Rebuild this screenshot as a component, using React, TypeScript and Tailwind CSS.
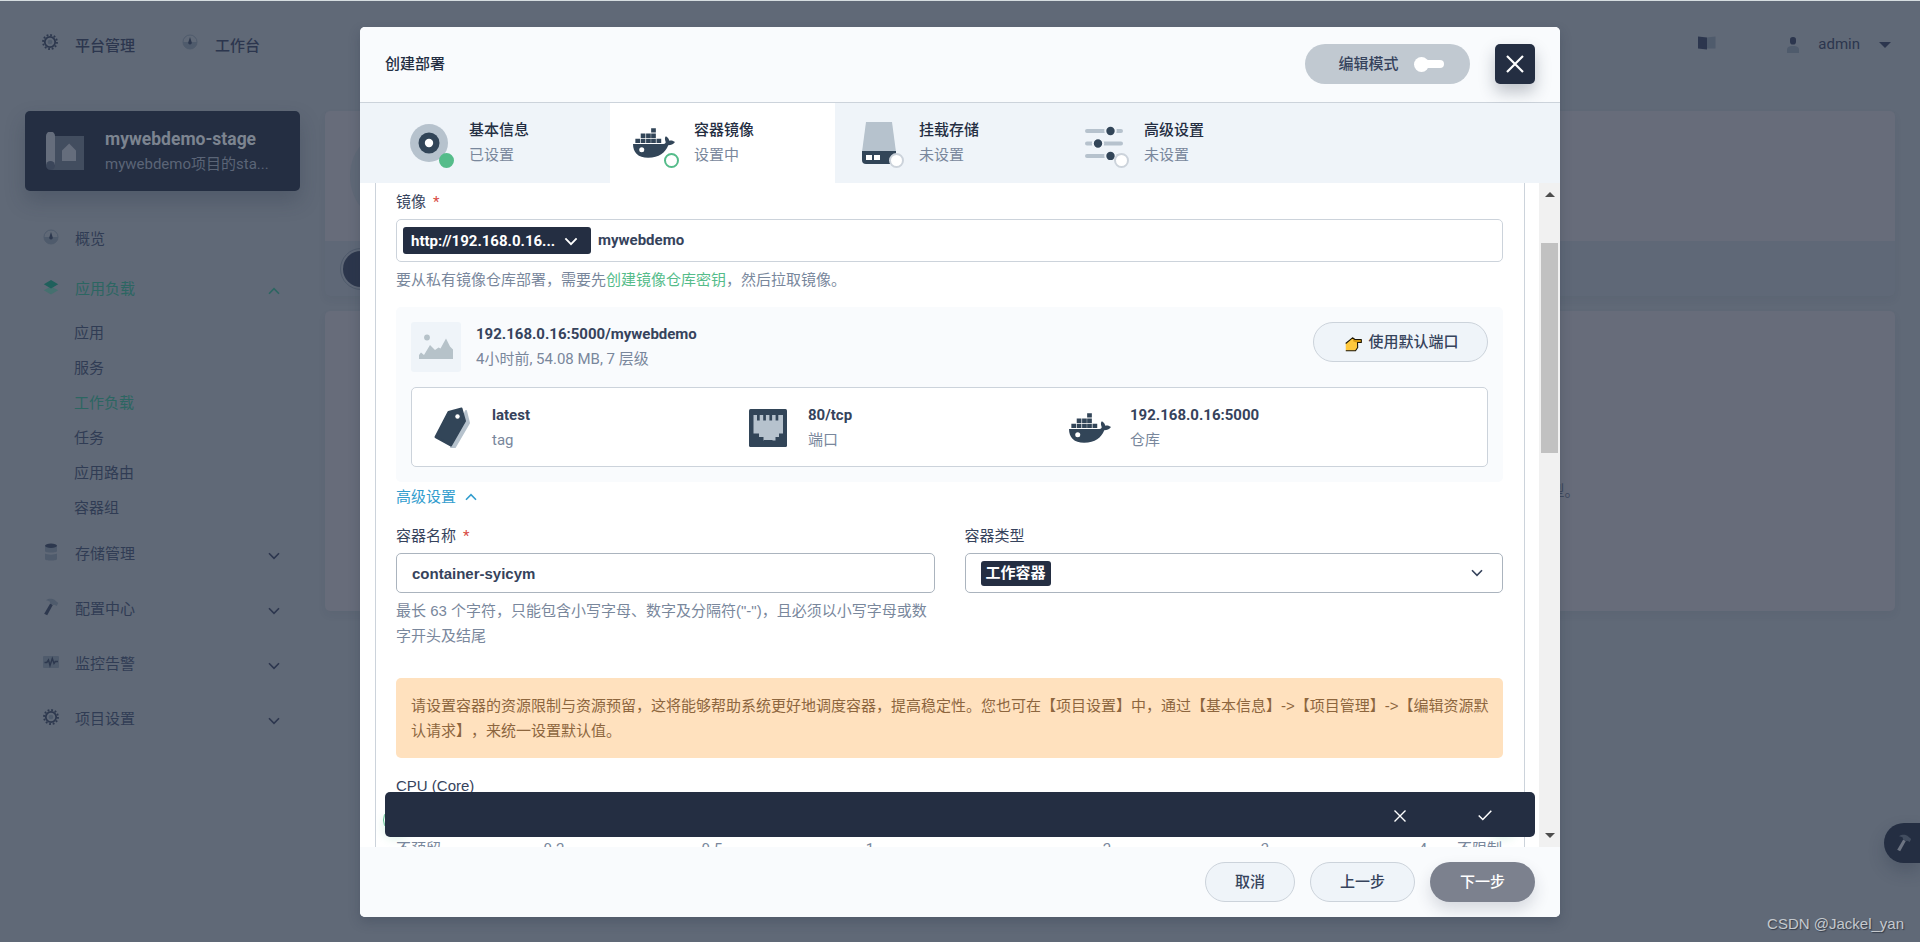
import type { ReactNode } from "react";
import clsx from "clsx";

interface IconProps {
    className?: string;
}

interface NavItem {
    label: string;
    icon: ReactNode;
    active?: boolean;
    children?: string[];
}

function Chevron({ className }: IconProps) {
    return (
        <svg viewBox="0 0 12 8" className={className} fill="none" stroke="currentColor" strokeWidth="1.6">
            <path d="M1 1.2 6 6.4 11 1.2" />
        </svg>
    );
}

function GearIcon({ className }: IconProps) {
    return (
        <svg viewBox="0 0 16 16" className={className} fill="none">
            <circle cx="8" cy="8" r="7" stroke="#2d384e" strokeWidth="1.8" strokeDasharray="1.8 1.865" />
            <circle cx="8" cy="8" r="5.2" stroke="#2d384e" strokeWidth="1.8" />
            <circle cx="8" cy="8" r="2.3" fill="#4f5b6c" />
        </svg>
    );
}

function GaugeIcon({ className }: IconProps) {
    return (
        <svg viewBox="0 0 16 16" className={className}>
            <circle cx="8" cy="8" r="7" fill="#606977" stroke="#4f5b6c" strokeWidth="1" />
            <path d="M1 8h14A7 7 0 0 1 1 8Z" fill="#4f5b6c" />
            <path d="M8 3 9.7 8.2A1.8 1.8 0 1 1 6.3 8.2Z" fill="#2d384e" />
        </svg>
    );
}

function LayersIcon({ className }: IconProps) {
    return (
        <svg viewBox="0 0 16 16" className={className}>
            <path d="M.8 11.3 8 7.5l7.2 3.8L8 15.4Z" fill="#45706f" />
            <path d="M.8 5.2 8 1l7.2 4.2L8 9.6Z" fill="#20605c" />
        </svg>
    );
}

function DatabaseIcon({ className }: IconProps) {
    return (
        <svg viewBox="0 0 16 18" className={className}>
            <path d="M2 3v5c0 2 12 2 12 0V3Z" fill="#4f5b6c" />
            <path d="M2 10.5V16c0 2 12 2 12 0v-5.5c-2 1.5-10 1.5-12 0Z" fill="#4f5b6c" />
            <ellipse cx="8" cy="2.8" rx="6" ry="2.2" fill="#2d384e" />
        </svg>
    );
}

function HammerIcon({ className, light }: IconProps & { light?: boolean }) {
    return (
        <svg viewBox="0 0 16 18" className={className}>
            <path d="M7.2 5.5 9.8 7 4.2 17.2 1.2 15.7Z" fill={light ? "#6d7482" : "#2d384e"} />
            <path
                d="M3 2.2C6 .3 10 .2 12.5 2.8L15.2 5 13.7 8 11.5 6.7 10.3 7 6.8 5.2 7 3.7C5.8 2.7 4.5 2.6 3 2.2Z"
                fill={light ? "#424d5f" : "#4f5b6c"}
            />
        </svg>
    );
}

function MonitorIcon({ className }: IconProps) {
    return (
        <svg viewBox="0 0 16 16" className={className}>
            <rect x="0" y="2" width="16" height="12" rx="1" fill="#4f5b6c" />
            <path d="M1.5 8.5h2.3L5.5 6 7 11.5 9.3 4.5l1.7 5 1.3-2H15" fill="none" stroke="#2d384e" strokeWidth="1.4" />
        </svg>
    );
}

function DockerIcon({ className }: IconProps) {
    return (
        <svg viewBox="0 0 125 88" className={className} fill="#324558">
            <path d="M54 0h14v13H54zM23 16h14v13H23zM39 16h14v13H39zM54 16h14v13H54zM7 31h14v13H7zM23 31h14v13H23zM39 31h14v13H39zM54 31h14v13H54zM70 31h14v13H70z" />
            <path d="M0 47H90C97 46 99 43 96 37C94 31 95 27 98 24C104 28 107 32 108 37C114 35 120 37 125 41C120 48 113 50 105 51C96 73 78 88 45 88C15 88 0 72 0 47Z" />
            <circle cx="26" cy="64" r="7.5" fill="#fff" />
        </svg>
    );
}

function DiskIcon({ className }: IconProps) {
    return (
        <svg viewBox="0 0 38 46" className={className}>
            <path d="M6 2h26l4 30H2Z" fill="#b6c2cd" />
            <path d="M2 31h34v9a4 4 0 0 1-4 4H6a4 4 0 0 1-4-4Z" fill="#324558" />
            <path d="M6 35h6v5H6zM14 35h6v5h-6z" fill="#fff" />
        </svg>
    );
}

function SlidersIcon({ className }: IconProps) {
    return (
        <svg viewBox="0 0 38 34" className={className}>
            <g stroke="#b6c2cd" strokeWidth="4" strokeLinecap="round">
                <path d="M2 5h34M2 17.5h34M2 30h34" />
            </g>
            <g fill="#324558" stroke="#eff4f9" strokeWidth="2">
                <circle cx="25.5" cy="5" r="5.2" />
                <circle cx="13" cy="17.5" r="5.2" />
                <circle cx="25.5" cy="30" r="5.2" />
            </g>
        </svg>
    );
}

function TagIcon({ className }: IconProps) {
    return (
        <svg viewBox="0 0 36 42" className={className} strokeLinejoin="round" strokeWidth="2">
            <path d="M32 4 35 16 21 40 17 40Z" fill="#b6c2cd" stroke="#b6c2cd" />
            <path d="M14.5 5 27.5 1.5 31 14 17 38.5 1.5 30Z" fill="#324558" stroke="#324558" />
            <circle cx="23.5" cy="9.5" r="2.2" fill="#fff" />
        </svg>
    );
}

function PortIcon({ className }: IconProps) {
    return (
        <svg viewBox="0 0 38 38" className={className}>
            <rect width="38" height="38" rx="1.5" fill="#324558" />
            <path
                d="M4.5 6H8v5.5h2.700V6h3.500v5.500h2.700V6h3.500v5.500h2.700V6h3.500v5.500h2.700V6H34v18.500h-4v3.500h-3.500v3.500H23.500v-.5H15v.5h-.5V28H10v-3.500H4.500Z"
                fill="#b6c2cd"
            />
        </svg>
    );
}

function BlueprintIcon({ className }: IconProps) {
    return (
        <svg viewBox="0 0 38 38" className={className}>
            <path d="M5 4h33v34H5Z" fill="#424d5f" />
            <path d="M0 4a4.5 4.5 0 0 1 9 0v29H0Z" fill="#656d7c" />
            <circle cx="4.5" cy="33.5" r="4.5" fill="#3b465a" />
            <path d="M16 18.5 23.2 11.5 30 18.5V29H16Z" fill="#656d7c" />
        </svg>
    );
}

const NAV_ITEMS: NavItem[] = [
    { label: "概览", icon: <GaugeIcon className="size-4" /> },
    {
        label: "应用负载",
        icon: <LayersIcon className="size-4" />,
        active: true,
        children: ["应用", "服务", "工作负载", "任务", "应用路由", "容器组"],
    },
    { label: "存储管理", icon: <DatabaseIcon className="h-[18px] w-4" /> },
    { label: "配置中心", icon: <HammerIcon className="h-[18px] w-4" /> },
    { label: "监控告警", icon: <MonitorIcon className="size-4" /> },
    { label: "项目设置", icon: <GearIcon className="size-4" /> },
];

const STEPS = [
    { title: "基本信息", status: "已设置", state: "done" },
    { title: "容器镜像", status: "设置中", state: "current" },
    { title: "挂载存储", status: "未设置", state: "todo" },
    { title: "高级设置", status: "未设置", state: "todo" },
];

const STEP_ICONS = [
    <svg viewBox="0 0 38 38" className="size-[38px]">
        <circle cx="19" cy="19" r="19" fill="#b6c2cd" />
        <circle cx="19" cy="19" r="10.5" fill="#324558" />
        <circle cx="19" cy="19" r="4.2" fill="#fff" />
    </svg>,
    <DockerIcon className="h-[30px] w-[42px]" />,
    <DiskIcon className="h-[46px] w-[38px]" />,
    <SlidersIcon className="h-[34px] w-[38px]" />,
];

function TopBar() {
    return (
        <header className="flex h-[90px] items-start justify-between border-t border-[#d6dde0] px-[42px] pt-[33px] text-[#2c364e]">
            <div className="flex">
                <div className="flex w-[140px] gap-[17px]">
                    <GearIcon className="size-4" />
                    <span className="font-medium">平台管理</span>
                </div>
                <div className="flex gap-[17px]">
                    <GaugeIcon className="size-4" />
                    <span className="font-medium">工作台</span>
                </div>
            </div>
            <div className="-mt-0.5 flex items-center">
                <svg viewBox="0 0 18 14" className="mr-[70px] -mt-1 h-3.5 w-[18px]">
                    <path d="M0 .5 9 1.5V13.5L0 12.5Z" fill="#2c364e" />
                    <path d="M9 1.5 17.5.5V12.5H9Z" fill="#4f5b6c" />
                </svg>
                <svg viewBox="0 0 14 16" className="mr-[18px] h-4 w-3.5">
                    <rect x="4" width="6" height="7.5" rx="2.8" fill="#2c364e" />
                    <path d="M1 16v-3c0-3 2-4 6-4s6 1 6 4v3Z" fill="#4f5b6c" />
                </svg>
                <span>admin</span>
                <svg viewBox="0 0 12 6" className="-mr-[13px] ml-[19px] h-1.5 w-3">
                    <path d="M0 0h12L6 6Z" fill="#2c364e" />
                </svg>
            </div>
        </header>
    );
}

function Sidebar() {
    return (
        <aside className="w-[300px] shrink-0 pl-[25px] pt-[21px]">
            <div className="flex h-20 items-center rounded-[5px] bg-[#242e42] pl-[21px] shadow-[0_10px_20px_rgba(36,46,66,0.25)]">
                <BlueprintIcon className="size-[38px]" />
                <div className="ml-[21px] pt-0.5">
                    <p className="text-[17.5px] leading-[25px] font-bold text-[#7c8490]">mywebdemo-stage</p>
                    <p className="leading-[25px] text-[#5b6577]">mywebdemo项目的sta...</p>
                </div>
            </div>
            <nav className="pt-[26px] text-[#303c54]">
                {NAV_ITEMS.map((item) => (
                    <div key={item.label} className={clsx(item.label === "概览" ? "mb-[10px]" : "mb-[15px]")}>
                        <div className={clsx("flex h-10 items-center pl-[18px] pt-[5px]", item.active && "text-[#2c6662]")}>
                            <span className="-mt-1.5">{item.icon}</span>
                            <span className="ml-4">{item.label}</span>
                            {item.label !== "概览" && (
                                <Chevron
                                    className={clsx("mt-0.5 ml-auto mr-5 h-2 w-3", item.active ? "rotate-180" : "text-[#2c364e]")}
                                />
                            )}
                        </div>
                        {item.children && (
                            <ul className="-mb-[9px] pt-[9px] pl-[49px]">
                                {item.children.map((child) => (
                                    <li
                                        key={child}
                                        className={clsx("h-[35px] leading-[35px]", child === "工作负载" && "text-[#2c6662]")}
                                    >
                                        {child}
                                    </li>
                                ))}
                            </ul>
                        )}
                    </div>
                ))}
            </nav>
        </aside>
    );
}

function Workspace() {
    return (
        <main className="flex grow flex-col gap-[15px] pt-[21px] pr-[25px] pl-[25px]">
            <section className="h-[185px] overflow-hidden rounded-[5px] bg-[#5f6877] shadow-[0_4px_8px_rgba(36,46,66,0.06)]">
                <div className="flex h-[130px] items-center bg-[#676c7a] pl-[25px]">
                    <div className="size-[100px] rounded-full bg-[#606977]" />
                </div>
                <div className="flex h-[55px] items-center pl-[18px]">
                    <div className="h-9 w-40 rounded-full bg-[#2c364c] outline-1 outline-offset-2 outline-[#4f5a6b]" />
                </div>
            </section>
            <section className="flex h-[300px] items-center justify-center rounded-[5px] bg-[#676c7a] pt-[60px] shadow-[0_4px_8px_rgba(36,46,66,0.06)]">
                <p className="w-[939px] text-right whitespace-nowrap text-[#3c475c]">工作负载通常是访问服务的实际载体，也是对节点日志收集、监控等系统应用的实际运行载体，是一组容器组的模型。</p>
            </section>
        </main>
    );
}

function StepTabs() {
    return (
        <div className="flex h-20 shrink-0 bg-[#eff4f9]">
            {STEPS.map((step, index) => (
                <div
                    key={step.title}
                    className={clsx(
                        "flex items-center",
                        index === 0 ? "w-[250px] pl-[45px]" : "w-[225px] pl-5",
                        step.state === "current" && "bg-white"
                    )}
                >
                    <div className="relative flex size-12 items-center justify-center">
                        {STEP_ICONS[index]}
                        <span
                            className={clsx(
                                "absolute -right-[1px] -bottom-[1px] size-[15px] rounded-full border-2",
                                step.state === "done" && "border-[#55bc8a] bg-[#55bc8a]",
                                step.state === "current" && "border-[#55bc8a] bg-white",
                                step.state === "todo" && "border-[#ccd3db] bg-white"
                            )}
                        />
                    </div>
                    <div className="ml-4 leading-[25px]">
                        <p className="font-medium text-[#242e42]">{step.title}</p>
                        <p className="text-[#79879c]">{step.status}</p>
                    </div>
                </div>
            ))}
        </div>
    );
}

function ImageFact({ icon, value, name }: { icon: ReactNode; value: string; name: string }) {
    return (
        <>
            <div className="flex w-[51px] justify-center">{icon}</div>
            <div className="ml-[15px] leading-[25px]">
                <p className="font-bold">{value}</p>
                <p className="text-[#79879c]">{name}</p>
            </div>
        </>
    );
}

function ImageCard() {
    return (
        <div className="mt-[14px] h-[175px] rounded-[5px] bg-[#f9fbfd] p-[15px] text-[#36435c]">
            <div className="flex h-[50px] items-start">
                <div className="flex size-[50px] items-center justify-center rounded-[3px] bg-[#eff4f9]">
                    <svg viewBox="0 0 36 26" className="h-[26px] w-9" fill="#b6c2c9">
                        <circle cx="9" cy="3.5" r="2.9" />
                        <path d="M1 25v-4l2-2.5 3 2.5 6-10 5 5 3.5-2.5 2 1 5.5-10 4 8 3 3v9.5Z" />
                    </svg>
                </div>
                <div className="ml-[15px] leading-[25px]">
                    <p className="font-bold">192.168.0.16:5000/mywebdemo</p>
                    <p className="text-[#79879c]">4小时前, 54.08 MB, 7 层级</p>
                </div>
                <button className="ml-auto flex h-10 w-[175px] items-center justify-center gap-1.5 rounded-full border border-[#ccd3db] bg-[#eff4f9] pl-[3px] font-medium">
                    <svg viewBox="0 0 17 15" className="mt-1 h-[15px] w-[17px]" strokeLinejoin="round">
                        <path d="M.7 6.5 7.5.8 10 2.5H16.3V5.5H12.5L12.7 10.5 10.5 13.8H.8Z" fill="#ffc83d" />
                        <path d="M7.7 1 10 2.5H16.3V5.5L12 5.5 8.5 4.5Z" fill="#d99a12" />
                        <path d="M.7 6.5 7.5.8 10 2.5H16.3V5.5H12.5L12.7 10.5 10.5 13.8H.8" fill="none" stroke="#1c1606" strokeWidth="1.1" />
                    </svg>
                    使用默认端口
                </button>
            </div>
            <div className="mt-[15px] flex h-20 items-center rounded-[5px] border border-[#ccd3db] bg-white pt-0.5 pl-[14px]">
                <div className="flex w-[316px] items-center">
                    <ImageFact icon={<TagIcon className="h-[42px] w-9" />} value="latest" name="tag" />
                </div>
                <div className="flex w-[322px] items-center">
                    <ImageFact icon={<PortIcon className="size-[38px]" />} value="80/tcp" name="端口" />
                </div>
                <div className="flex items-center">
                    <ImageFact icon={<DockerIcon className="h-[30px] w-[42px]" />} value="192.168.0.16:5000" name="仓库" />
                </div>
            </div>
        </div>
    );
}

function SliderTicks() {
    return (
        <div className="mt-[3px] flex leading-[25px] text-[#79879c]">
            <span className="w-[79px] shrink-0">不预留</span>
            {["0.2", "0.5", "1"].map((tick) => (
                <span key={tick} className="w-[158px] shrink-0 text-center">{tick}</span>
            ))}
            <span className="w-[79px] shrink-0" />
            {["2", "3", "4"].map((tick) => (
                <span key={tick} className="w-[158px] shrink-0 text-center">{tick}</span>
            ))}
            <span className="-ml-[45px] shrink-0">不限制</span>
        </div>
    );
}

function ContainerForm() {
    return (
        <div className="h-full grow pr-[14px] pl-[15px]">
            <div className="h-full overflow-hidden border-x border-[#ccd3db] pt-[7px] pr-[21px] pl-5 text-[#36435c]">
                <p className="leading-[25px]">
                    镜像<span className="ml-[7px] text-[#d84a44]">*</span>
                </p>
                <div className="mt-1 flex h-[43px] items-center rounded-[5px] border border-[#ccd3db] pl-1.5">
                    <div className="flex h-[27px] w-[188px] items-center justify-between rounded-[3px] bg-[#242e42] pt-0.5 pr-[13px] pl-2 font-bold text-white">
                        http://192.168.0.16...
                        <Chevron className="h-[9px] w-3.5" />
                    </div>
                    <span className="ml-[7px] font-bold">mywebdemo</span>
                </div>
                <p className="mt-1.5 leading-[25px] text-[#79879c]">
                    要从私有镜像仓库部署，需要先<span className="text-[#55bc8a]">创建镜像仓库密钥</span>，然后拉取镜像。
                </p>
                <ImageCard />
                <p className="flex h-[30px] items-center gap-[9px] leading-[29px] text-[#329dce]">
                    高级设置
                    <Chevron className="h-2 w-3 rotate-180" />
                </p>
                <div className="mt-3 flex gap-[30px]">
                    <div className="flex-1">
                        <p className="leading-[25px]">
                            容器名称<span className="ml-[7px] text-[#d84a44]">*</span>
                        </p>
                        <div className="mt-1 flex h-10 items-center rounded-[5px] border border-[#abb4be] pl-[15px] font-['Liberation_Sans','Noto_Sans_CJK_SC',sans-serif] font-bold">
                            container-syicym
                        </div>
                        <p className="mt-[5px] font-['Liberation_Sans','Noto_Sans_CJK_SC',sans-serif] leading-[25px] text-[#79879c]">
                            最长 63 个字符，只能包含小写字母、数字及分隔符("-")，且必须以小写字母或数字开头及结尾
                        </p>
                    </div>
                    <div className="flex-1">
                        <p className="leading-[25px]">容器类型</p>
                        <div className="mt-1 flex h-10 items-center justify-between rounded-[5px] border border-[#abb4be] pr-[19px] pl-[15px]">
                            <span className="rounded-[3px] bg-[#242e42] px-[5px] leading-[25px] font-bold text-white">工作容器</span>
                            <Chevron className="h-2 w-3" />
                        </div>
                    </div>
                </div>
                <p className="mt-[30px] h-20 rounded-[5px] bg-[#ffe1be] pt-[15px] pr-3 pl-[15px] font-['Liberation_Sans','Noto_Sans_CJK_SC',sans-serif] leading-[25px] text-[#8d663e]">
                    请设置容器的资源限制与资源预留，这将能够帮助系统更好地调度容器，提高稳定性。您也可在【项目设置】中，通过【基本信息】-&gt;【项目管理】-&gt;【编辑资源默认请求】，来统一设置默认值。
                </p>
                <p className="mt-[15px] font-['Liberation_Sans','Noto_Sans_CJK_SC',sans-serif] leading-[25px]">CPU (Core)</p>
                <div className="-mx-[13px] mt-2 flex h-7 items-center justify-between">
                    <span className="size-[26px] rounded-full border border-[#55bc8a] bg-white shadow-[0_6px_10px_rgba(85,188,138,0.2)]" />
                    <span className="size-[26px] rounded-full border border-[#55bc8a] bg-white shadow-[0_6px_10px_rgba(85,188,138,0.2)]" />
                </div>
                <SliderTicks />
            </div>
        </div>
    );
}

function ScrollBar() {
    return (
        <div className="flex h-full w-[21px] shrink-0 flex-col items-center bg-[#f1f1f1] py-[9px]">
            <svg viewBox="0 0 10 5" className="h-[5px] w-[10px]" fill="#4d4d4d">
                <path d="M5 0 10 5H0Z" />
            </svg>
            <div className="mt-[46px] h-[210px] w-[17px] bg-[#c1c1c1]" />
            <svg viewBox="0 0 10 5" className="mt-auto h-[5px] w-[10px]" fill="#4d4d4d">
                <path d="M0 0h10L5 5Z" />
            </svg>
        </div>
    );
}

function CreateDialog() {
    return (
        <div className="flex h-[890px] w-[1200px] flex-col overflow-hidden rounded-[5px] bg-white shadow-[0_5px_12px_rgba(36,46,66,0.25)]">
            <div className="flex h-[76px] shrink-0 items-center border-b border-[#ccd3db] bg-[#f9fbfd] px-[25px] pb-[1px]">
                <h1 className="font-medium text-[#242e42]">创建部署</h1>
                <div className="ml-auto flex h-10 w-[165px] items-center justify-center rounded-full bg-[#c1c9d1] pl-[7px] font-medium text-[#36435c]">
                    编辑模式
                    <span className="ml-[15px] flex w-[30px] items-center">
                        <span className="size-[15px] rounded-full bg-white" />
                        <span className="-ml-1.5 h-2 grow rounded-full bg-white" />
                    </span>
                </div>
                <button className="ml-[25px] flex size-10 items-center justify-center rounded-[5px] bg-[#242e42] shadow-[0_8px_16px_rgba(36,46,66,0.28)]">
                    <svg viewBox="0 0 18 18" className="size-[18px]" stroke="#fff" strokeWidth="2.2">
                        <path d="M1 1 17 17M17 1 1 17" />
                    </svg>
                </button>
            </div>
            <StepTabs />
            <div className="relative flex h-[664px] shrink-0">
                <ContainerForm />
                <ScrollBar />
                <div className="absolute bottom-[10px] left-[25px] flex h-[45px] w-[1150px] items-center justify-end rounded-[5px] bg-[#242e42] pt-0.5 pr-[43px]">
                    <svg viewBox="0 0 12 12" className="mr-[72px] size-3" stroke="#fff" strokeWidth="1.4">
                        <path d="M.5.5 11.5 11.5M11.5.5.5 11.5" />
                    </svg>
                    <svg viewBox="0 0 14 11" className="h-[11px] w-3.5" fill="none" stroke="#fff" strokeWidth="1.5">
                        <path d="M.7 5.5 4.8 9.5 13.3.8" />
                    </svg>
                </div>
            </div>
            <div className="flex grow items-center justify-end gap-[15px] bg-[#f9fbfd] pr-[25px] font-medium text-[#36435c]">
                <button className="h-10 w-[90px] rounded-full border border-[#ccd3db] bg-[#eff4f9]">取消</button>
                <button className="h-10 w-[105px] rounded-full border border-[#ccd3db] bg-[#eff4f9]">上一步</button>
                <button className="h-10 w-[105px] rounded-full bg-[#7c818e] text-white shadow-[0_8px_16px_rgba(36,46,66,0.16)]">下一步</button>
            </div>
        </div>
    );
}

export default function App() {
    return (
        <div className="relative h-[942px] w-[1920px] overflow-hidden bg-[#606977] font-['Roboto','Noto_Sans_CJK_SC',sans-serif] text-[15px] leading-[25px] [text-spacing-trim:space-all]">
            <TopBar />
            <div className="flex">
                <Sidebar />
                <Workspace />
            </div>
            <div className="absolute top-[823px] right-0 flex h-10 w-9 items-center rounded-l-full bg-[#242e42] pl-3 shadow-[0_8px_16px_rgba(36,46,66,0.25)]">
                <HammerIcon className="h-[18px] w-4" light />
            </div>
            <div className="absolute inset-0 flex items-start justify-center pt-[27px]">
                <CreateDialog />
            </div>
            <p className="absolute right-4 bottom-[6px] font-['Liberation_Sans','Noto_Sans_CJK_SC',sans-serif] text-[#c5c9ce] [text-shadow:1px_1px_1px_#333b48]">
                CSDN @Jackel_yan
            </p>
        </div>
    );
}
